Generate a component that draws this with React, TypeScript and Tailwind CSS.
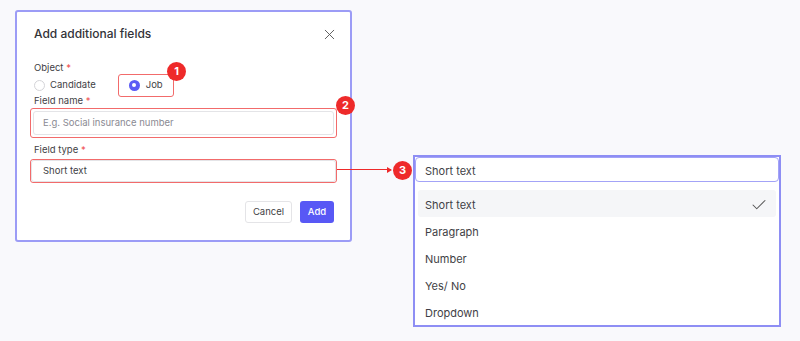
import { Check, X } from "lucide-react";

const options = ["Short text", "Paragraph", "Number", "Yes/ No", "Dropdown"];

function Badge({ n, className }: { n: number; className: string }) {
  return (
    <span
      className={`absolute flex h-[19px] w-[19px] items-center justify-center rounded-full bg-[#ee2a2a] text-[11px] font-bold leading-none text-white ${className}`}
    >
      {n}
    </span>
  );
}

function Label({ text }: { text: string }) {
  return (
    <div className="ml-[4px] h-[12px] text-[9.5px] leading-[12px] text-[#3f3f46]">
      {text} <span className="text-[#f05252]">*</span>
    </div>
  );
}

export default function App() {
  return (
    <div
      className="relative flex h-[341px] w-[800px] items-start bg-[#f9f9fc]"
      style={{ fontFamily: "Inter, 'Noto Sans', sans-serif" }}
    >
      {/* modal */}
      <div className="ml-[15px] mt-[10px] flex h-[232px] w-[337px] flex-col rounded-[3px] border-2 border-[#9c9cf6] bg-white px-[13px]">
        <div className="mt-[12px] flex h-[20px] items-center justify-between">
          <h2 className="ml-[4px] text-[12px] font-medium text-[#333338]">Add additional fields</h2>
          <X className="-mr-[1px] h-[17px] w-[17px] text-[#555]" strokeWidth={1.3} />
        </div>

        <div className="mt-[18px]">
          <Label text="Object" />
        </div>
        <div className="-mt-px flex h-[23px] items-center pt-[1px]">
          <div className="ml-[4px] flex items-center gap-[5px]">
            <span className="h-[11px] w-[11px] rounded-full border border-[#d4d4d8] bg-white" />
            <span className="text-[9.5px] text-[#3f3f46]">Candidate</span>
          </div>
          <div className="ml-[22px] flex h-[23px] w-[56px] items-center gap-[6px] rounded-[3px] border border-[#f26b6b] pl-[10px]">
            <span className="flex h-[11px] w-[11px] items-center justify-center rounded-full bg-[#5b5bf5]">
              <span className="h-[4px] w-[4px] rounded-full bg-white" />
            </span>
            <span className="text-[9.5px] text-[#3f3f46]">Job</span>
          </div>
        </div>

        <div className="-mt-px">
          <Label text="Field name" />
        </div>
        <div className="mt-px rounded-[3px] border border-[#f26b6b] p-[2px]">
          <div className="flex h-[24px] items-center rounded-[3px] border border-[#e4e4e7] pl-[9px] text-[9.5px] text-[#8a8a93]">
            E.g. Social insurance number
          </div>
        </div>

        <div className="mt-[6px]">
          <Label text="Field type" />
        </div>
        <div className="mt-[3px] rounded-[3px] border border-[#f26b6b]">
          <div className="flex h-[22px] items-center rounded-[3px] border border-[#e4e4e7] pl-[11px] text-[9.5px] text-[#3f3f46]">
            Short text
          </div>
        </div>

        <div className="mr-[3px] mt-[18px] flex justify-end gap-[8px]">
          <button className="h-[22px] w-[47px] rounded-[3px] border border-[#e4e4e7] bg-white text-[9.5px] text-[#3f3f46]">
            Cancel
          </button>
          <button className="h-[22px] w-[34px] rounded-[3px] bg-[#5858f5] text-[9.5px] font-medium text-white">
            Add
          </button>
        </div>
      </div>

      {/* dropdown */}
      <div className="ml-[61px] mt-[155px] flex h-[172px] w-[368px] flex-col border-2 border-[#8e8ef4] bg-white">
        <div className="flex h-[27px] items-center rounded-[4px] border-[1.5px] border-[#a3a3f7] pl-[9px] pt-[3px] text-[11px] text-[#3f3f46]">
          Short text
        </div>
        <div className="mt-[8px] flex flex-col px-[3px]">
          {options.map((o, i) => (
            <div
              key={o}
              className={`flex h-[27px] items-center justify-between rounded-[3px] pl-[7px] pr-[8px] pt-[3px] text-[11px] text-[#3f3f46] ${
                i === 0 ? "bg-[#f5f6f8]" : ""
              }`}
            >
              <span>{o}</span>
              {i === 0 && <Check className="h-[18px] w-[18px] text-[#555]" strokeWidth={1.4} />}
            </div>
          ))}
        </div>
      </div>

      {/* annotations */}
      <div className="absolute left-[337px] top-[169px] h-px w-[54px] bg-[#ee2a2a]" />
      <div className="absolute left-[387px] top-[166.5px] h-0 w-0 border-y-[3px] border-l-[5px] border-y-transparent border-l-[#ee2a2a]" />
      <Badge n={1} className="left-[167px] top-[62px]" />
      <Badge n={2} className="left-[336px] top-[96px]" />
      <Badge n={3} className="left-[393px] top-[161px]" />
    </div>
  );
}
